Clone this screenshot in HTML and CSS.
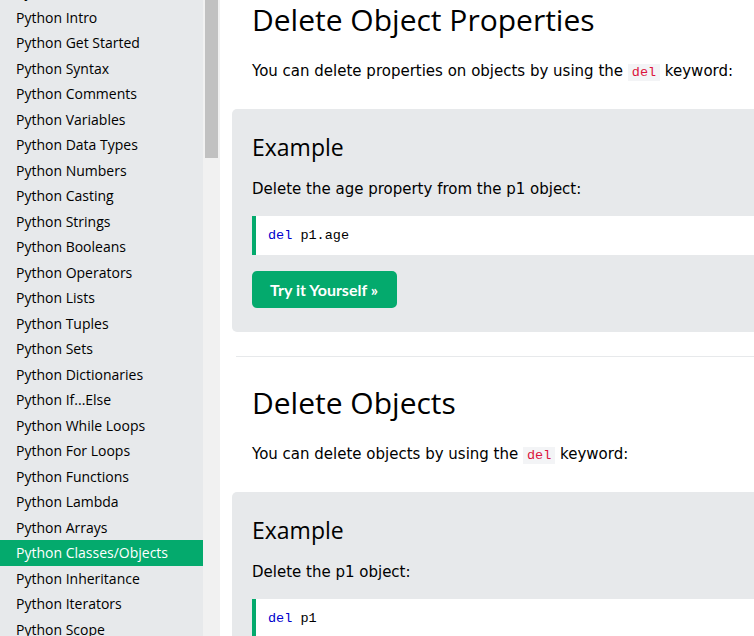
FILE: index.html
```html
<!DOCTYPE html>
<html>
<head>
<meta charset="utf-8">
<link rel="stylesheet" href="styles.css">
</head>
<body>
<div class="page">
  <nav class="sidebar">
    <ul class="menu">
      <li>Python Home</li>
      <li>Python Intro</li>
      <li>Python Get Started</li>
      <li>Python Syntax</li>
      <li>Python Comments</li>
      <li>Python Variables</li>
      <li>Python Data Types</li>
      <li>Python Numbers</li>
      <li>Python Casting</li>
      <li>Python Strings</li>
      <li>Python Booleans</li>
      <li>Python Operators</li>
      <li>Python Lists</li>
      <li>Python Tuples</li>
      <li>Python Sets</li>
      <li>Python Dictionaries</li>
      <li>Python If...Else</li>
      <li>Python While Loops</li>
      <li>Python For Loops</li>
      <li>Python Functions</li>
      <li>Python Lambda</li>
      <li>Python Arrays</li>
      <li class="active">Python Classes/Objects</li>
      <li>Python Inheritance</li>
      <li>Python Iterators</li>
      <li>Python Scope</li>
    </ul>
  </nav>
  <div class="scrollbar"><div class="thumb"></div></div>
  <main class="main">
    <h1 class="title first">Delete Object Properties</h1>
    <p class="text">You can delete properties on objects by using the <code class="kw">del</code> keyword:</p>
    <section class="example">
      <h2 class="ex-title">Example</h2>
      <p class="ex-text">Delete the age property from the p1 object:</p>
      <div class="code"><span class="k">del</span> p1.age</div>
      <a class="try">Try it Yourself »</a>
    </section>
    <hr class="sep">
    <h1 class="title">Delete Objects</h1>
    <p class="text">You can delete objects by using the <code class="kw">del</code> keyword:</p>
    <section class="example">
      <h2 class="ex-title">Example</h2>
      <p class="ex-text">Delete the p1 object:</p>
      <div class="code"><span class="k">del</span> p1</div>
    </section>
  </main>
</div>
</body>
</html>
```
FILE: styles.css
```css
html, body {
  margin: 0;
  padding: 0;
  background: #fff;
}
.page {
  display: flex;
  height: 636px;
  overflow: hidden;
}
.sidebar {
  width: 203px;
  flex: none;
  background: #E7E9EB;
  overflow: hidden;
}
.menu {
  list-style: none;
  margin: -21px 0 0 0;
  padding: 0;
  font-family: "Open Sans", sans-serif;
  font-size: 14px;
  color: #000;
}
.menu li {
  line-height: 25.5px;
  padding: 0 16px;
  white-space: nowrap;
}
.menu li.active {
  background: #04AA6D;
  color: #fff;
}
.scrollbar {
  width: 17px;
  flex: none;
  background: #F1F1F1;
  padding: 0 2px;
  box-sizing: border-box;
}
.thumb {
  height: 158px;
  background: #C1C1C1;
}
.main {
  flex: 1;
  min-width: 0;
  padding-left: 12px;
  overflow: hidden;
  display: flex;
  flex-direction: column;
}
.main > * {
  width: 560px;
  flex: none;
}
.title {
  font-family: "Open Sans", sans-serif;
  font-weight: 400;
  font-size: 30px;
  line-height: 40px;
  margin: 0 0 0 20px;
  color: #000;
}
.text {
  font-family: "DejaVu Sans", Verdana, sans-serif;
  font-size: 15px;
  line-height: 24px;
  margin: 19px 0 0 20px;
  color: #000;
}
.kw {
  font-family: "Liberation Mono", monospace;
  font-size: 13.5px;
  color: crimson;
  background: #F3F4F6;
  padding: 1px 4px;
}
.example {
  background: #E7E9EB;
  border-radius: 5px;
  padding: 21px 20px 24px;
  margin-top: 24px;
  box-sizing: border-box;
  width: 600px;
}
.ex-title {
  font-family: "Open Sans", sans-serif;
  font-weight: 400;
  font-size: 23px;
  line-height: 34px;
  margin: 0;
  color: #000;
}
.ex-text {
  font-family: "DejaVu Sans", Verdana, sans-serif;
  font-size: 15px;
  line-height: 24px;
  margin: 13px 0 0;
  color: #000;
}
.code {
  background: #fff;
  border-left: 4px solid #04AA6D;
  font-family: "Liberation Mono", monospace;
  font-size: 13.5px;
  line-height: 39px;
  padding-left: 12px;
  margin-top: 15px;
  color: #000;
}
.k {
  color: mediumblue;
}
.try {
  display: inline-block;
  background: #04AA6D;
  color: #fff;
  border-radius: 5px;
  font-family: "Lato", sans-serif;
  font-weight: 700;
  font-size: 16px;
  line-height: 37px;
  padding: 0 19px 0 18px;
  margin-top: 16px;
}
.sep {
  border: none;
  border-top: 1px solid #E7E9EB;
  margin: 24px 0 0 4px;
  width: 560px;
}
.sep + .title {
  margin-top: 26px;
}
```
